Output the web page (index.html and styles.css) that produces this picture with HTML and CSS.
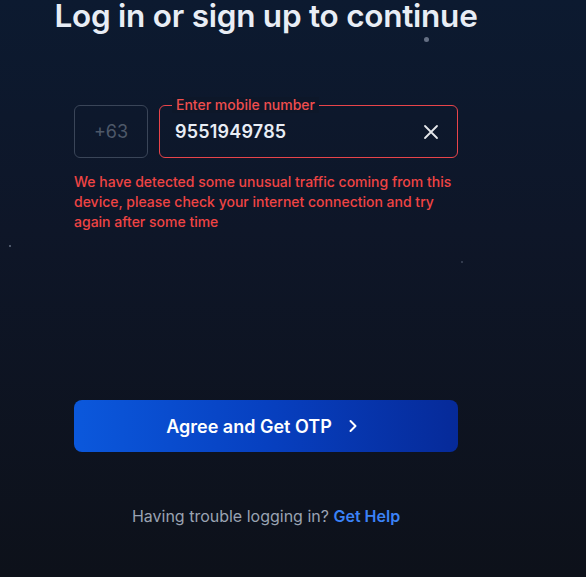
FILE: index.html
```html
<!DOCTYPE html>
<html lang="en">
<head>
    <meta charset="UTF-8">
    <meta name="viewport" content="width=device-width, initial-scale=1.0">
    <title>Login</title>
    <link rel="stylesheet" href="styles.css">
</head>
<body>
<div id="app">
    <span class="star star-1"></span>
    <span class="star star-2"></span>
    <span class="star star-3"></span>
    <section class="login">
        <h1 class="login-title">Log in or sign up to continue</h1>
        <div class="phone-row">
            <div class="country-code">+63</div>
            <div class="mobile-field">
                <span class="mobile-label">Enter mobile number</span>
                <span class="mobile-value">9551949785</span>
                <span class="clear">
                    <svg width="16" height="16" viewBox="0 0 16 16">
                        <path d="M2 2 L14 14 M14 2 L2 14" stroke="#e5e7eb" stroke-width="1.8" stroke-linecap="round"/>
                    </svg>
                </span>
            </div>
        </div>
        <p class="error-msg">We have detected some unusual traffic coming from this device, please check your internet connection and try again after some time</p>
        <button class="otp-btn">
            Agree and Get OTP
            <svg width="10" height="14" viewBox="0 0 10 14">
                <path d="M2.5 2 L7.5 7 L2.5 12" fill="none" stroke="#fff" stroke-width="2" stroke-linecap="round" stroke-linejoin="round"/>
            </svg>
        </button>
        <p class="help">Having trouble logging in? <a href="#">Get Help</a></p>
    </section>
</div>
</body>
</html>
```

FILE: styles.css
```css
* {
    margin: 0;
    padding: 0;
    box-sizing: border-box;
}

html, body, #app {
    width: 100%;
    height: 100%;
    overflow: hidden;
}

body {
    font-family: Inter, "Noto Sans", sans-serif;
}

#app {
    position: relative;
    background: linear-gradient(180deg, #0c1a30 0%, #0e1628 40%, #0d111a 100%);
}

/* faint dots in the background */
.star {
    position: absolute;
    width: 3px;
    height: 3px;
    border-radius: 50%;
    background: #8a94a8;
    opacity: 0.7;
}

.star-1 {
    left: 424px;
    top: 37px;
    width: 5px;
    height: 5px;
}

.star-2 {
    left: 9px;
    top: 245px;
    width: 2px;
    height: 2px;
}

.star-3 {
    left: 461px;
    top: 261px;
    width: 2px;
    height: 2px;
    opacity: 0.4;
}

.login {
    width: 532px;
    display: flex;
    flex-direction: column;
    align-items: center;
}

.login-title {
    font-size: 31.5px;
    line-height: 28px;
    padding-top: 2px;
    font-weight: 600;
    color: #e8edf5;
    letter-spacing: -0.25px;
    white-space: nowrap;
}

.phone-row {
    width: 384px;
    margin-top: 75px;
    display: flex;
    gap: 11px;
}

.country-code {
    width: 74px;
    height: 53px;
    border: 1px solid #3a4558;
    border-radius: 6px;
    display: flex;
    align-items: center;
    justify-content: center;
    color: #4d5869;
    font-size: 18px;
}

.mobile-field {
    position: relative;
    flex: 1;
    height: 53px;
    border: 1px solid #e8444a;
    border-radius: 6px;
    display: flex;
    align-items: center;
    padding: 0 18px 0 15px;
}

.mobile-label {
    position: absolute;
    left: 12px;
    top: -9px;
    padding: 0 4px;
    background: #0d1729;
    color: #ef4e4e;
    font-size: 14px;
    line-height: 16px;
    font-weight: 500;
}

.mobile-value {
    flex: 1;
    color: #e8edf5;
    font-size: 18px;
    font-weight: 600;
    letter-spacing: 0.2px;
}

.clear {
    display: flex;
}

.error-msg {
    width: 384px;
    margin-top: 14px;
    color: #ef4444;
    font-size: 14px;
    line-height: 20px;
    font-weight: 500;
}

.otp-btn {
    width: 384px;
    height: 52px;
    margin-top: 168px;
    border: none;
    border-radius: 8px;
    background: linear-gradient(90deg, #0b58dc 0%, #0740c0 50%, #062a99 100%);
    color: #fff;
    font-family: inherit;
    font-size: 18px;
    font-weight: 600;
    display: flex;
    align-items: center;
    justify-content: center;
    gap: 16px;
    padding-right: 8px;
}

.help {
    margin-top: 52px;
    color: #9aa3b2;
    font-size: 16px;
    line-height: 24px;
}

.help a {
    color: #3b82f6;
    font-weight: 600;
    text-decoration: none;
}
```
